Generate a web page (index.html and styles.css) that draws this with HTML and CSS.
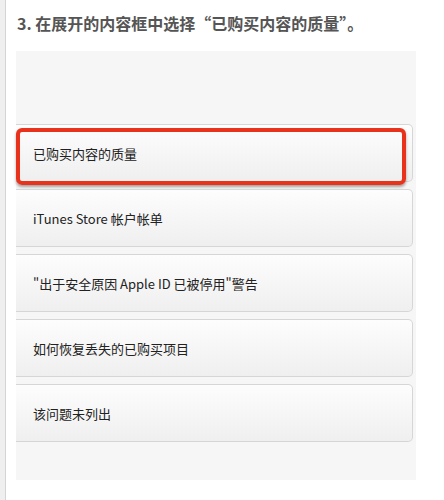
FILE: index.html
```html
<!DOCTYPE html>
<html lang="zh-CN">
<head>
  <meta charset="UTF-8">
  <title>已购买内容的质量</title>
  <link rel="stylesheet" href="styles.css">
</head>
<body>
  <div class="page">
    <h2 class="step">3. 在展开的内容框中选择“已购买内容的质量”。</h2>

    <div class="panel">
      <ul class="options">
        <li class="option selected">已购买内容的质量</li>
        <li class="option">iTunes Store 帐户帐单</li>
        <li class="option">"出于安全原因 Apple ID 已被停用"警告</li>
        <li class="option">如何恢复丢失的已购买项目</li>
        <li class="option">该问题未列出</li>
      </ul>
    </div>
  </div>
</body>
</html>
```

FILE: styles.css
```css
body {
  margin: 0;
  background: #fff;
  font-family: "Noto Sans CJK SC", "Liberation Sans", sans-serif;
}

.page {
  min-height: 500px;
  box-sizing: border-box;
  margin-left: 5px;
  border-left: 1px solid #d4d4d4;
  box-shadow: -5px 0 0 #efefef;
  padding: 10px 0 20px 10px;
}

.step {
  margin: 0 0 15px 1px;
  font-size: 16px;
  line-height: 26px;
  font-weight: bold;
  color: #555;
}

.panel {
  width: 400px;
  height: 429px;
  box-sizing: border-box;
  background: #f6f6f6;
  padding-top: 73px;
}

.options {
  list-style: none;
  margin: 0;
  padding: 0;
  display: flex;
  flex-direction: column;
  gap: 7px;
}

.option {
  position: relative;
  width: 397px;
  height: 58px;
  box-sizing: border-box;
  display: flex;
  align-items: center;
  padding-left: 17px;
  font-size: 13px;
  color: #222;
  background: linear-gradient(#fdfdfd, #efefef);
  border: 1px solid #d6d6d6;
  border-left: none;
  border-radius: 0 5px 5px 0;
}

.selected::after {
  content: "";
  position: absolute;
  left: 0;
  top: 3px;
  width: 390px;
  height: 57px;
  box-sizing: border-box;
  border: 4px solid #e8321c;
  border-radius: 6px;
  box-shadow: 0 2px 3px rgba(0, 0, 0, 0.35);
}
```
